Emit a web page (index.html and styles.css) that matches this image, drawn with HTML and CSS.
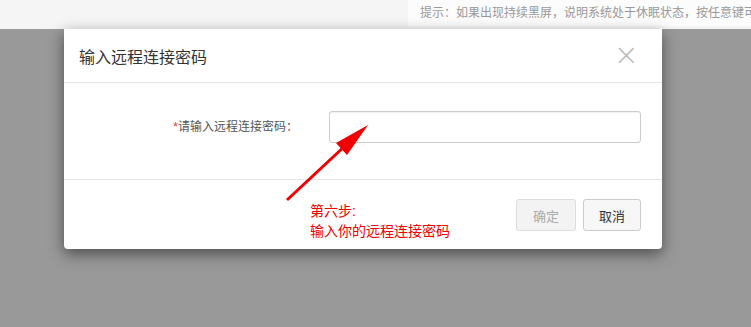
FILE: index.html
```html
<!DOCTYPE html>
<html lang="zh-CN">
<head>
  <meta charset="UTF-8" />
  <title>输入远程连接密码</title>
  <link rel="stylesheet" href="styles.css">
</head>
<body>
  <div class="topbar">
    <div class="notice">提示：如果出现持续黑屏，说明系统处于休眠状态，按任意键可唤醒</div>
  </div>

  <div class="stage">
    <div class="modal">
      <div class="modal-header">
        <h4 class="modal-title">输入远程连接密码</h4>
        <span class="close">&times;</span>
      </div>
      <div class="modal-body">
        <label class="field-label"><span class="req">*</span>请输入远程连接密码：</label>
        <input type="password" class="field-input" />
      </div>
      <div class="modal-footer">
        <button class="btn btn-ok" disabled>确定</button>
        <button class="btn">取消</button>
      </div>
    </div>

    <!-- 标注 -->
    <svg class="arrow" width="100" height="90" viewBox="0 0 100 90">
      <line x1="2" y1="83" x2="62" y2="27" stroke="#f00000" stroke-width="3" />
      <polygon points="83,8 51,26 62,38" fill="#f00000" />
    </svg>
    <div class="note">第六步:<br>输入你的远程连接密码</div>
  </div>
</body>
</html>
```

FILE: styles.css
```css
body {
  margin: 0;
  font-family: "Liberation Sans", "Noto Sans CJK SC", sans-serif;
  background: #999;
}
.topbar {
  height: 29px;
  background: #f5f5f5;
  display: flex;
  justify-content: flex-end;
}
.notice {
  width: 331px;
  height: 26px;
  padding-left: 12px;
  background: #fcfcfc;
  color: #999;
  font-size: 12px;
  line-height: 26px;
  white-space: nowrap;
  overflow: hidden;
}
.stage {
  position: relative;
  height: 298px;
  padding-left: 64px;
  background: #999;
}
.modal {
  width: 598px;
  background: #fff;
  border-radius: 0 0 4px 4px;
  box-shadow: 0 5px 15px rgba(0,0,0,0.5);
}
.modal-header {
  height: 53px;
  display: flex;
  align-items: center;
  justify-content: space-between;
  padding: 0 23px 0 15px;
  border-bottom: 1px solid #e5e5e5;
}
.modal-title {
  margin: 0;
  font-size: 16px;
  font-weight: normal;
  color: #333;
}
.close {
  font-size: 30px;
  font-weight: 200;
  line-height: 1;
  color: #bbb;
  font-family: "DejaVu Sans", sans-serif;
  margin-top: -2px;
}
.modal-body {
  height: 96px;
  display: flex;
  align-items: flex-start;
  padding-top: 28px;
  box-sizing: border-box;
}
.field-label {
  width: 234px;
  text-align: right;
  font-size: 12px;
  color: #555;
  line-height: 32px;
}
.req {
  color: #e33;
}
.field-input {
  margin-left: 31px;
  width: 312px;
  height: 32px;
  box-sizing: border-box;
  border: 1px solid #ccc;
  border-radius: 3px;
  box-shadow: inset 0 1px 1px rgba(0,0,0,0.06);
}
.modal-footer {
  height: 70px;
  border-top: 1px solid #e5e5e5;
  display: flex;
  justify-content: flex-end;
  align-items: flex-start;
  gap: 7px;
  padding: 19px 21px 0 0;
  box-sizing: border-box;
}
.btn {
  height: 32px;
  padding: 0 15px;
  font-family: "Liberation Sans", "Noto Sans CJK SC", sans-serif;
  font-size: 13px;
  color: #333;
  background: #f7f7f7;
  border: 1px solid #ccc;
  border-radius: 3px;
}
.btn-ok {
  width: 60px;
  color: #aaa;
  background: #f3f3f3;
  border-color: #ddd;
}
.arrow {
  position: absolute;
  left: 285px;
  top: 88px;
}
.note {
  position: absolute;
  left: 310px;
  top: 172px;
  color: #f00000;
  font-size: 14px;
  line-height: 20px;
}
```
